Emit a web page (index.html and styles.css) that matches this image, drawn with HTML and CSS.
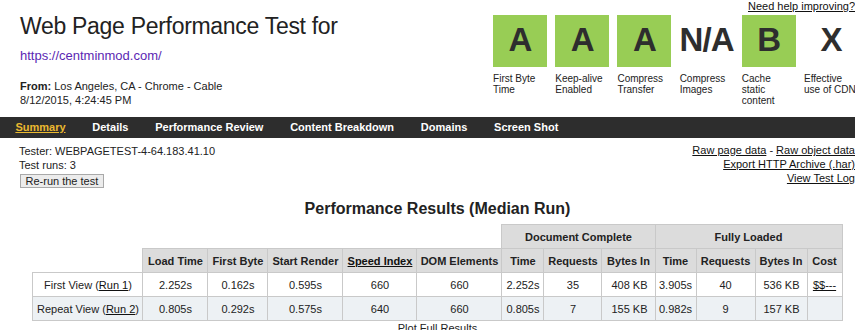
FILE: index.html
```html
<!DOCTYPE html>
<html lang="en">
<head>
<meta charset="utf-8">
<title>Web Page Performance Test</title>
<link rel="stylesheet" href="styles.css">
</head>
<body>
<div class="page">
  <header class="top">
    <div class="intro">
      <h1 class="title">Web Page Performance Test for</h1>
      <a class="url" href="#">https://centminmod.com/</a>
      <div class="meta"><b>From:</b> Los Angeles, CA - Chrome - Cable<br>8/12/2015, 4:24:45 PM</div>
    </div>
    <div class="grades">
      <a class="help" href="#">Need help improving?</a>
      <div class="grade-row">
        <div class="grade"><div class="grade-box pass">A</div><div class="grade-label">First Byte Time</div></div>
        <div class="grade"><div class="grade-box pass">A</div><div class="grade-label">Keep-alive Enabled</div></div>
        <div class="grade"><div class="grade-box pass">A</div><div class="grade-label">Compress Transfer</div></div>
        <div class="grade"><div class="grade-box">N/A</div><div class="grade-label">Compress Images</div></div>
        <div class="grade"><div class="grade-box pass">B</div><div class="grade-label">Cache static content</div></div>
        <div class="grade"><div class="grade-box">X</div><div class="grade-label">Effective use of CDN</div></div>
      </div>
    </div>
  </header>

  <nav class="tabs">
    <a class="tab active" href="#">Summary</a>
    <a class="tab" href="#">Details</a>
    <a class="tab" href="#">Performance Review</a>
    <a class="tab" href="#">Content Breakdown</a>
    <a class="tab" href="#">Domains</a>
    <a class="tab" href="#">Screen Shot</a>
  </nav>

  <section class="info">
    <div class="tester">
      <div>Tester: WEBPAGETEST-4-64.183.41.10</div>
      <div>Test runs: 3</div>
      <button class="rerun" type="button">Re-run the test</button>
    </div>
    <div class="downloads">
      <div><a href="#">Raw page data</a> - <a href="#">Raw object data</a></div>
      <div><a href="#">Export HTTP Archive (.har)</a></div>
      <div><a href="#">View Test Log</a></div>
    </div>
  </section>

  <h2 class="results-title">Performance Results (Median Run)</h2>

  <table class="results">
    <colgroup>
      <col class="w-label"><col class="w-load"><col class="w-fb"><col class="w-sr"><col class="w-si"><col class="w-dom">
      <col class="w-dtime"><col class="w-dreq"><col class="w-dbytes">
      <col class="w-ftime"><col class="w-freq"><col class="w-fbytes"><col class="w-cost">
    </colgroup>
    <tr>
      <td class="blank" colspan="6"></td>
      <th colspan="3">Document Complete</th>
      <th colspan="4">Fully Loaded</th>
    </tr>
    <tr>
      <td class="blank"></td>
      <th>Load Time</th>
      <th>First Byte</th>
      <th>Start Render</th>
      <th><a href="#">Speed Index</a></th>
      <th>DOM Elements</th>
      <th>Time</th>
      <th>Requests</th>
      <th>Bytes In</th>
      <th>Time</th>
      <th>Requests</th>
      <th>Bytes In</th>
      <th>Cost</th>
    </tr>
    <tr>
      <td>First View (<a href="#">Run 1</a>)</td>
      <td>2.252s</td>
      <td>0.162s</td>
      <td>0.595s</td>
      <td>660</td>
      <td>660</td>
      <td>2.252s</td>
      <td>35</td>
      <td class="num">408 KB</td>
      <td>3.905s</td>
      <td>40</td>
      <td class="num">536 KB</td>
      <td><a href="#">$$---</a></td>
    </tr>
    <tr class="alt">
      <td>Repeat View (<a href="#">Run 2</a>)</td>
      <td>0.805s</td>
      <td>0.292s</td>
      <td>0.575s</td>
      <td>640</td>
      <td>660</td>
      <td>0.805s</td>
      <td>7</td>
      <td class="num">155 KB</td>
      <td>0.982s</td>
      <td>9</td>
      <td class="num">157 KB</td>
      <td></td>
    </tr>
  </table>
  <div class="plot">Plot Full Results</div>
</div>
</body>
</html>
```
FILE: styles.css
```css
html, body {
  margin: 0;
  padding: 0;
  overflow: hidden;
  background: #fff;
}

body {
  font-family: "Liberation Sans", Arial, sans-serif;
  font-size: 11px;
  color: #222;
}

a {
  color: #111;
}

.page {
  width: 875px;
}

/* ---------- header ---------- */
.top {
  display: flex;
  justify-content: space-between;
  align-items: flex-start;
  padding: 0 17px 0 20px;
  height: 107px;
}

.intro {
  display: flex;
  flex-direction: column;
  align-items: flex-start;
  padding-top: 13px;
}

.title {
  margin: 0;
  font-size: 23px;
  line-height: 26px;
  font-weight: normal;
  letter-spacing: -0.3px;
  color: #222;
}

.url {
  margin-top: 9px;
  font-size: 13px;
  line-height: 15px;
  color: #5b27b3;
  text-decoration: none;
}

.meta {
  margin-top: 16px;
  font-size: 11px;
  line-height: 14px;
  color: #222;
}

.grades {
  display: flex;
  flex-direction: column;
  align-items: flex-end;
}

.help {
  font-size: 11px;
  line-height: 12px;
  color: #111;
  margin-right: 3px;
}

.grade-row {
  display: grid;
  grid-template-columns: repeat(6, 54px);
  column-gap: 8.2px;
  margin-top: 3px;
}

.grade-box {
  height: 52px;
  display: flex;
  align-items: center;
  justify-content: center;
  font-size: 33px;
  font-weight: bold;
  letter-spacing: -0.8px;
  color: #2e2e2e;
  padding-bottom: 2px;
  box-sizing: border-box;
}

.grade-box.pass {
  background: #98cd55;
}

.grade-label {
  margin-top: 6px;
  font-size: 10px;
  line-height: 11px;
  color: #222;
  white-space: normal;
}

/* ---------- nav ---------- */
.tabs {
  display: flex;
  background: #2d2d2d;
  height: 21px;
  margin-top: 10px;
  padding-left: 2px;
}

.tab {
  padding: 0 13.4px;
  font-size: 11px;
  font-weight: bold;
  line-height: 21px;
  color: #fff;
  text-decoration: none;
}

.tab.active {
  color: #ebb92f;
  text-decoration: underline;
}

/* ---------- info ---------- */
.info {
  display: flex;
  justify-content: space-between;
  padding: 5px 20px 0 19px;
  line-height: 14px;
}

.tester {
  padding-top: 1px;
  display: flex;
  flex-direction: column;
  align-items: flex-start;
}

.rerun {
  margin: 2px 0 0 1px;
  padding: 0 4.5px;
  height: 14px;
  font-family: "Liberation Sans", Arial, sans-serif;
  font-size: 11px;
  line-height: 12px;
  color: #222;
  background: #ececec;
  border: 1px solid #a9a9a9;
  border-radius: 0;
}

.downloads {
  text-align: right;
}

/* ---------- results ---------- */
.results-title {
  margin: 11px 0 0;
  font-size: 16px;
  line-height: 19px;
  text-align: center;
  color: #222;
}

.results {
  margin: 6px auto 0;
  width: 809px;
  table-layout: fixed;
  border-collapse: collapse;
}

.w-label { width: 110px; }
.w-load { width: 65px; }
.w-fb { width: 60px; }
.w-sr { width: 75px; }
.w-si { width: 74px; }
.w-dom { width: 85px; }
.w-dtime { width: 42px; }
.w-dreq { width: 58px; }
.w-dbytes { width: 53px; }
.w-ftime { width: 41px; }
.w-freq { width: 59px; }
.w-fbytes { width: 52px; }
.w-cost { width: 35px; }

.results th,
.results td {
  height: 23px;
  padding: 0 2px;
  border: 1px solid #c9c9c9;
  font-size: 11px;
  text-align: center;
  white-space: nowrap;
  overflow: hidden;
  color: #222;
}

.results th {
  background: #dcdcdc;
  font-weight: bold;
}

.results td.blank {
  border: none;
  background: transparent;
}

.results td.num {
  text-align: right;
  padding-right: 7px;
}

.results tr.alt td {
  background: #edf1f4;
}

.plot {
  text-align: center;
  line-height: 14px;
}
```
